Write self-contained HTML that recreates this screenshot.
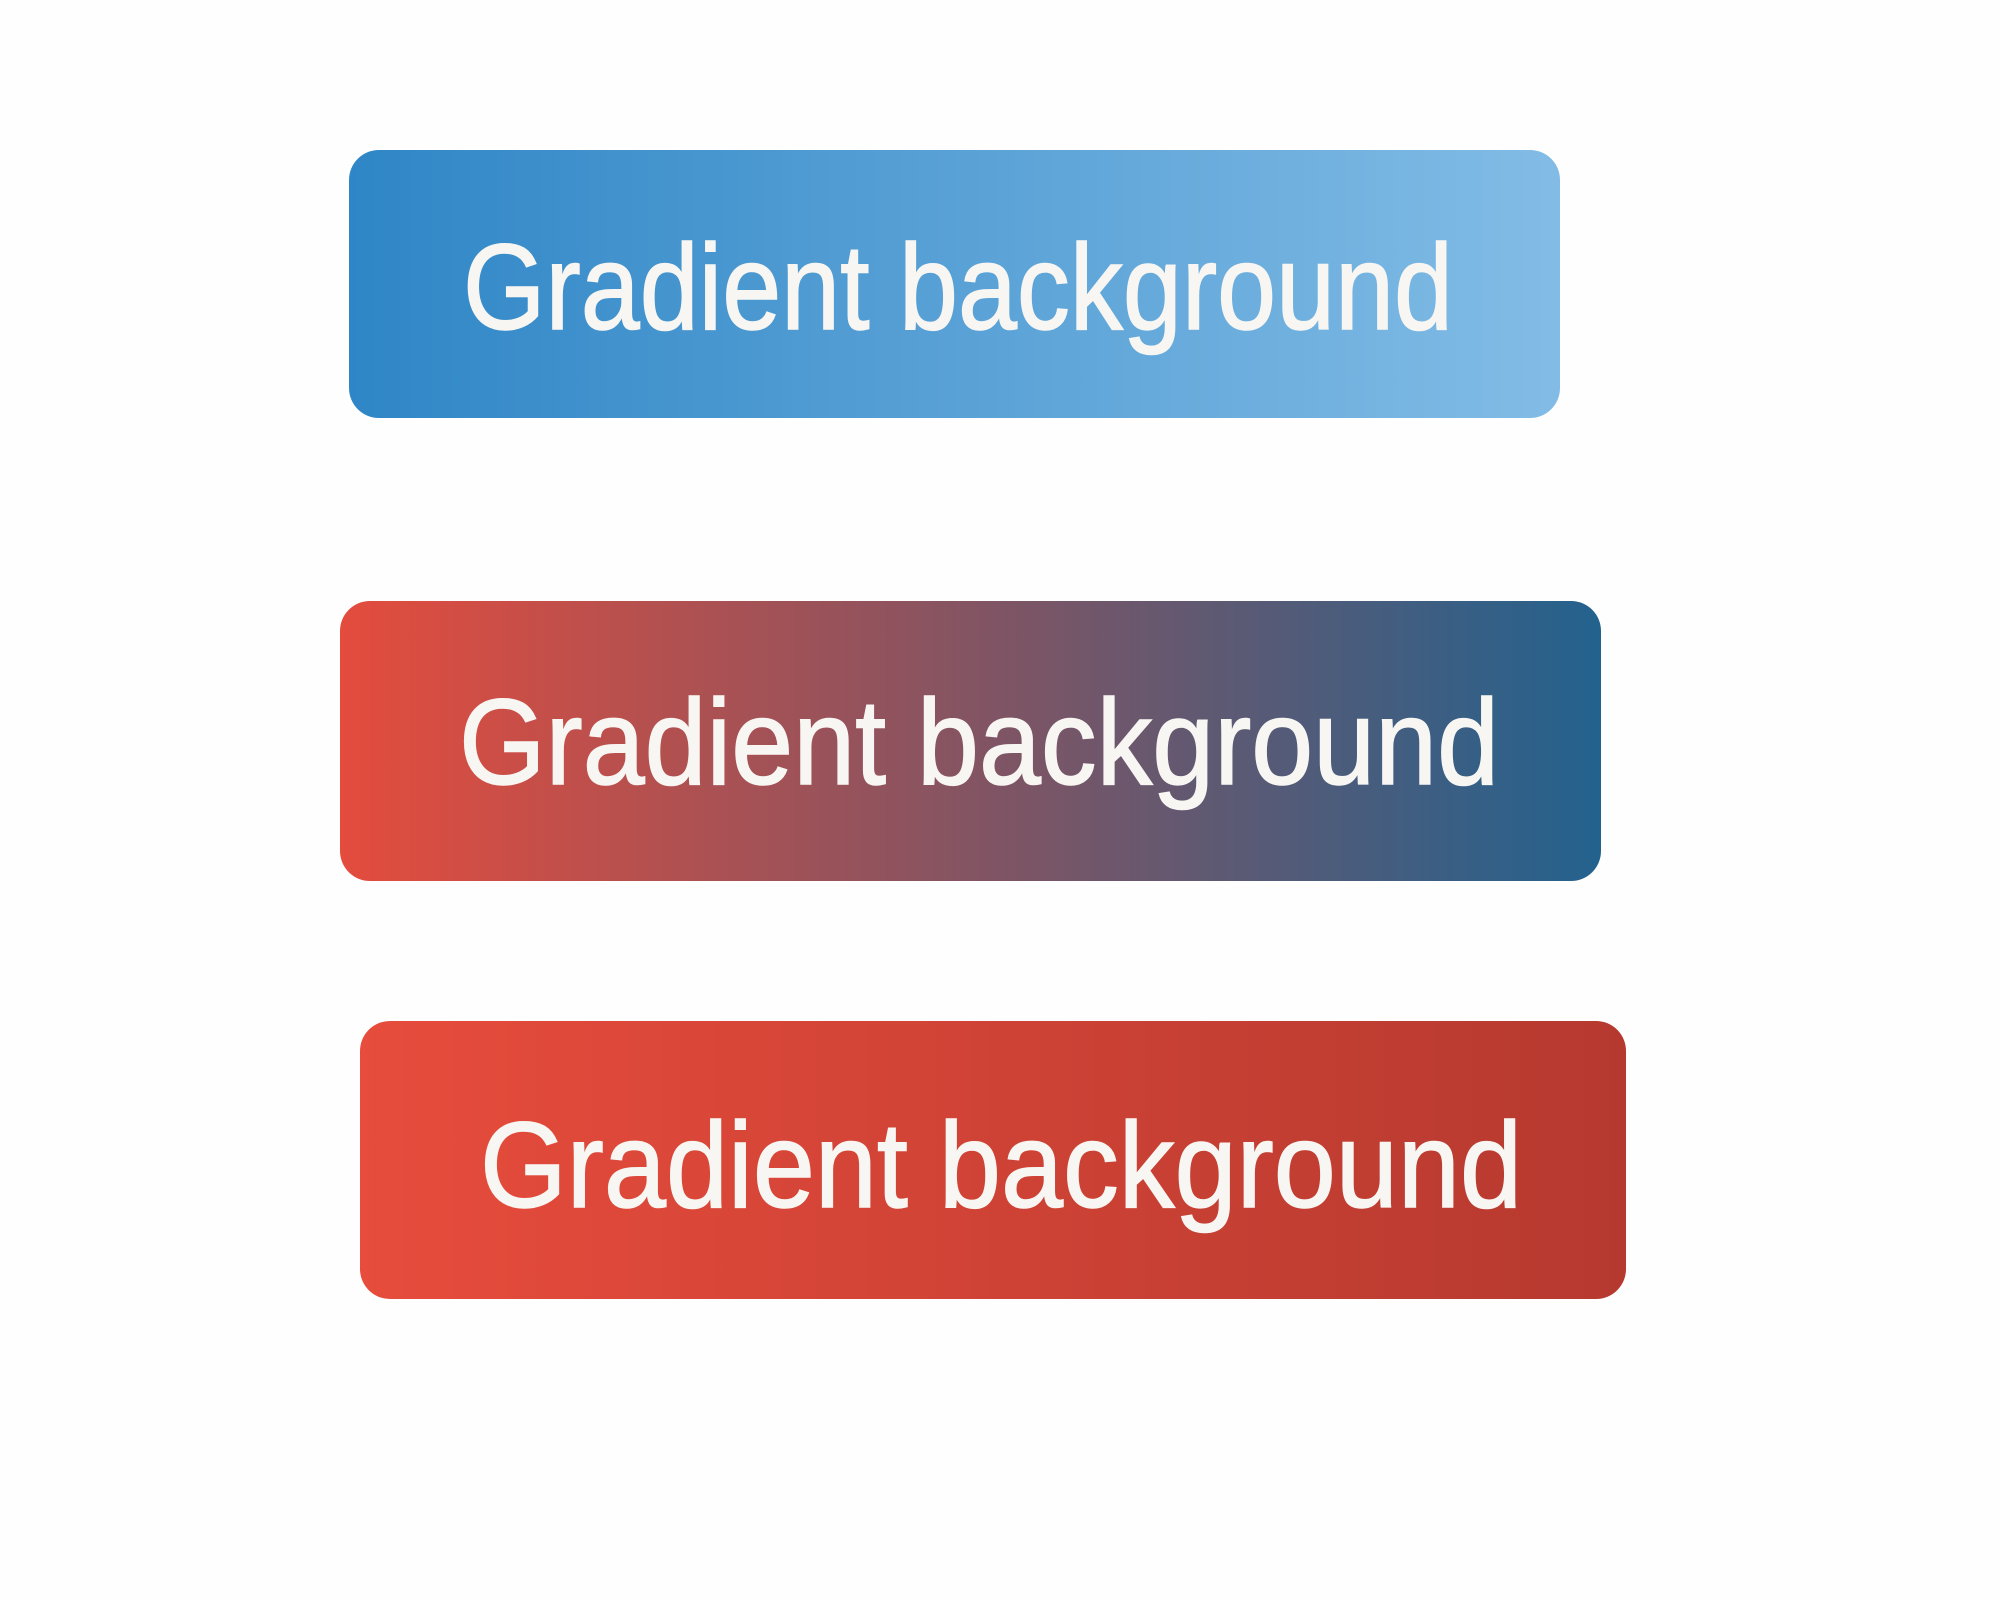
<!DOCTYPE html>
<html><head><meta charset="utf-8"><style>
html,body{margin:0;padding:0;background:#fefefe;}
svg{display:block}
</style></head><body>
<svg width="2000" height="1600" viewBox="0 0 2000 1600" xmlns="http://www.w3.org/2000/svg">
<defs>
<linearGradient id="g1" x1="0" x2="1" y1="0" y2="0"><stop offset="0" stop-color="#2f86c6"/><stop offset="1" stop-color="#82bce6"/></linearGradient>
<linearGradient id="g2" x1="0" x2="1" y1="0" y2="0"><stop offset="0" stop-color="#e44c3d"/><stop offset="0.55" stop-color="#7a5566"/><stop offset="1" stop-color="#23628e"/></linearGradient>
<linearGradient id="g3" x1="0" x2="1" y1="0" y2="0"><stop offset="0" stop-color="#e74c3c"/><stop offset="1" stop-color="#b6392f"/></linearGradient>
</defs>
<rect width="2000" height="1600" fill="#fefefe"/>
<rect x="349" y="150" width="1211" height="268" rx="30" fill="url(#g1)"/>
<rect x="340" y="601" width="1261" height="280" rx="30" fill="url(#g2)"/>
<rect x="360" y="1021" width="1266" height="278" rx="30" fill="url(#g3)"/>
<g font-family="Liberation Sans, sans-serif" font-size="122" fill="#f8f6f2" stroke="#f8f6f2" stroke-width="1.5">
<text x="463" y="329" textLength="990" lengthAdjust="spacingAndGlyphs">Gradient background</text>
<text x="459" y="784" textLength="1040" lengthAdjust="spacingAndGlyphs">Gradient background</text>
<text x="480" y="1207" textLength="1042" lengthAdjust="spacingAndGlyphs">Gradient background</text>
</g>
</svg>
</body></html>
